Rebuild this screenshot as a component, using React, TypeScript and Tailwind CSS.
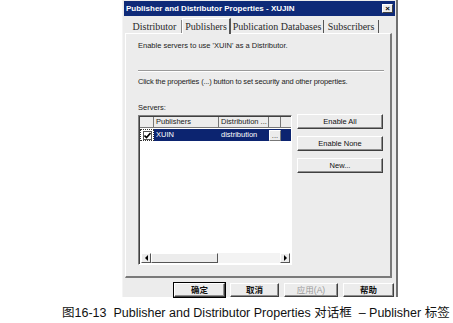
import React from "react";

const sans = { fontFamily: '"Liberation Sans", Arial, sans-serif' };
const serif = { fontFamily: '"Liberation Serif", "Times New Roman", serif' };
const cjk = { fontFamily: '"Liberation Sans", "Noto Sans CJK SC", sans-serif' };

function Btn({ label, className = "", disabled = false, def = false }: { label: React.ReactNode; className?: string; disabled?: boolean; def?: boolean }) {
  return (
    <div
      className={
        "flex items-center justify-center bg-[#ececec] border border-t-white border-l-white border-b-[#404040] border-r-[#404040] shadow-[inset_-1px_-1px_0_#909090] " +
        (def ? "outline outline-1 outline-black " : "") +
        (disabled ? "text-[#9a9a9a] " : "text-[#111] ") +
        className
      }
    >
      {label}
    </div>
  );
}

export default function App() {
  return (
    <div className="w-[453px] h-[323px] bg-white flex flex-col overflow-hidden">
      <div className="ml-[122px] w-[276px] h-[297px] bg-[#ececec] border-r-2 border-r-[#707070] border-l border-l-[#f4f4f4] flex flex-col">
        {/* title bar */}
        <div className="h-[15px] mt-[1px] mx-[1px] bg-[#0e2a78] flex items-center justify-between pl-[2px] pr-[2px]">
          <span className="text-white font-bold text-[8px] tracking-[0px] leading-none" style={sans}>
            Publisher and Distributor Properties - XUJIN
          </span>
          <div className="w-[11px] h-[9px] bg-[#ececec] border border-t-white border-l-white border-b-[#404040] border-r-[#404040] flex items-center justify-center text-[8px] leading-none font-bold text-black" style={sans}>
            ×
          </div>
        </div>
        {/* tabs */}
        <div className="h-[16px] mt-[1px] flex items-end pl-[5px] text-[10px] leading-none text-[#2a2a2a]" style={serif}>
          <div className="h-[13px] w-[54px] flex items-center justify-center border-r border-r-[#888]">Distributor</div>
          <div className="h-[16px] w-[49px] flex items-center justify-center border-l border-t border-l-white border-t-white border-r-2 border-r-[#555] bg-[#ececec] relative top-[1px]">Publishers</div>
          <div className="h-[13px] w-[93px] flex items-center justify-center border-r border-r-[#555]">Publication Databases</div>
          <div className="h-[13px] w-[55px] flex items-center justify-center border-r border-r-[#555]">Subscribers</div>
        </div>
        {/* panel */}
        <div className="ml-[2px] w-[267px] h-[245px] border-t border-l border-t-white border-l-white border-r-2 border-r-[#7a7a7a] border-b-2 border-b-[#7a7a7a] flex flex-col pl-[12px] text-[7.5px] text-[#222]" style={sans}>
          <div className="h-[10px] mt-[7px] leading-[10px]">Enable servers to use &#39;XUIN&#39; as a Distributor.</div>
          <div className="mt-[19px] mr-[6px] h-[2px] border-t border-t-[#9a9a9a] border-b border-b-white" />
          <div className="h-[10px] mt-[5px] leading-[10px] tracking-[-0.15px]">Click the properties (...) button to set security and other properties.</div>
          <div className="h-[10px] mt-[16px] leading-[10px]">Servers:</div>
          <div className="flex mt-[2px]">
            {/* list */}
            <div className="w-[154px] h-[150px] bg-white border-t border-l border-t-[#808080] border-l-[#808080] border-b border-r border-b-white border-r-white shadow-[inset_1px_1px_0_#404040] flex flex-col pl-[1px] pt-[1px]">
              <div className="flex h-[11px] bg-[#ececec]">
                <div className="w-[14px] border-r border-b border-r-[#777] border-b-[#777]" />
                <div className="w-[65px] border-r border-b border-r-[#777] border-b-[#777] pl-[2px] leading-[10px]">Publishers</div>
                <div className="w-[50px] border-r border-b border-r-[#777] border-b-[#777] pl-[2px] leading-[10px]">Distribution ...</div>
                <div className="w-[12px] border-r border-b border-r-[#777] border-b-[#777]" />
                <div className="flex-1 border-b border-b-[#777]" />
              </div>
              <div className="flex h-[12px] mt-[1px]">
                <div className="w-[14px] flex items-center justify-center border border-dotted border-[#333]">
                  <div className="w-[9px] h-[9px] border border-[#555] bg-white flex items-center justify-center">
                    <svg width="7" height="7" viewBox="0 0 7 7">
                      <path d="M0.5 3.5 L2.5 5.5 L6.5 1" stroke="#000" strokeWidth="1.6" fill="none" />
                    </svg>
                  </div>
                </div>
                <div className="flex-1 bg-[#0c2470] flex items-center text-white">
                  <div className="w-[65px] pl-[2px]">XUIN</div>
                  <div className="w-[50px] pl-[2px]">distribution</div>
                  <div className="w-[12px] h-[11px] bg-[#ececec] text-[#333] flex items-end justify-center leading-[8px] border border-t-white border-l-white border-b-[#777] border-r-[#777]">...</div>
                </div>
              </div>
              <div className="flex-1" />
              <div className="flex h-[10px] mb-[1px] mx-[1px] bg-[#f3f3f3]">
                <div className="w-[10px] bg-[#ececec] border border-t-white border-l-white border-b-[#555] border-r-[#555] flex items-center justify-center">
                  <div className="w-0 h-0 border-y-[3px] border-y-transparent border-r-[3px] border-r-black" />
                </div>
                <div className="w-[67px] bg-[#ececec] border border-t-white border-l-white border-b-[#555] border-r-[#555]" />
                <div className="flex-1" />
                <div className="w-[10px] bg-[#ececec] border border-t-white border-l-white border-b-[#555] border-r-[#555] flex items-center justify-center">
                  <div className="w-0 h-0 border-y-[3px] border-y-transparent border-l-[3px] border-l-black" />
                </div>
              </div>
            </div>
            {/* side buttons */}
            <div className="ml-[5px] w-[86px] flex flex-col">
              <Btn label="Enable All" className="h-[15px] mt-[-1px]" />
              <Btn label="Enable None" className="h-[15px] mt-[7px]" />
              <Btn label="New..." className="h-[15px] mt-[7px]" />
            </div>
          </div>
        </div>
        {/* bottom buttons */}
        <div className="flex mt-[5px] pl-[51px] gap-[5px] text-[8.5px] font-bold" style={cjk}>
          <Btn label="确定" def className="w-[51px] h-[14px]" />
          <Btn label="取消" className="w-[49px] h-[14px]" />
          <Btn label="应用(A)" disabled className="w-[54px] h-[14px] font-normal" />
          <Btn label="帮助" className="w-[51px] h-[14px]" />
        </div>
      </div>
      <div className="mt-[9px] pl-[62px] text-[12.5px] leading-[14px] text-[#111] whitespace-nowrap" style={cjk}>
        图16-13&nbsp;&nbsp;Publisher and Distributor Properties 对话框&nbsp;&nbsp;– Publisher 标签
      </div>
    </div>
  );
}
